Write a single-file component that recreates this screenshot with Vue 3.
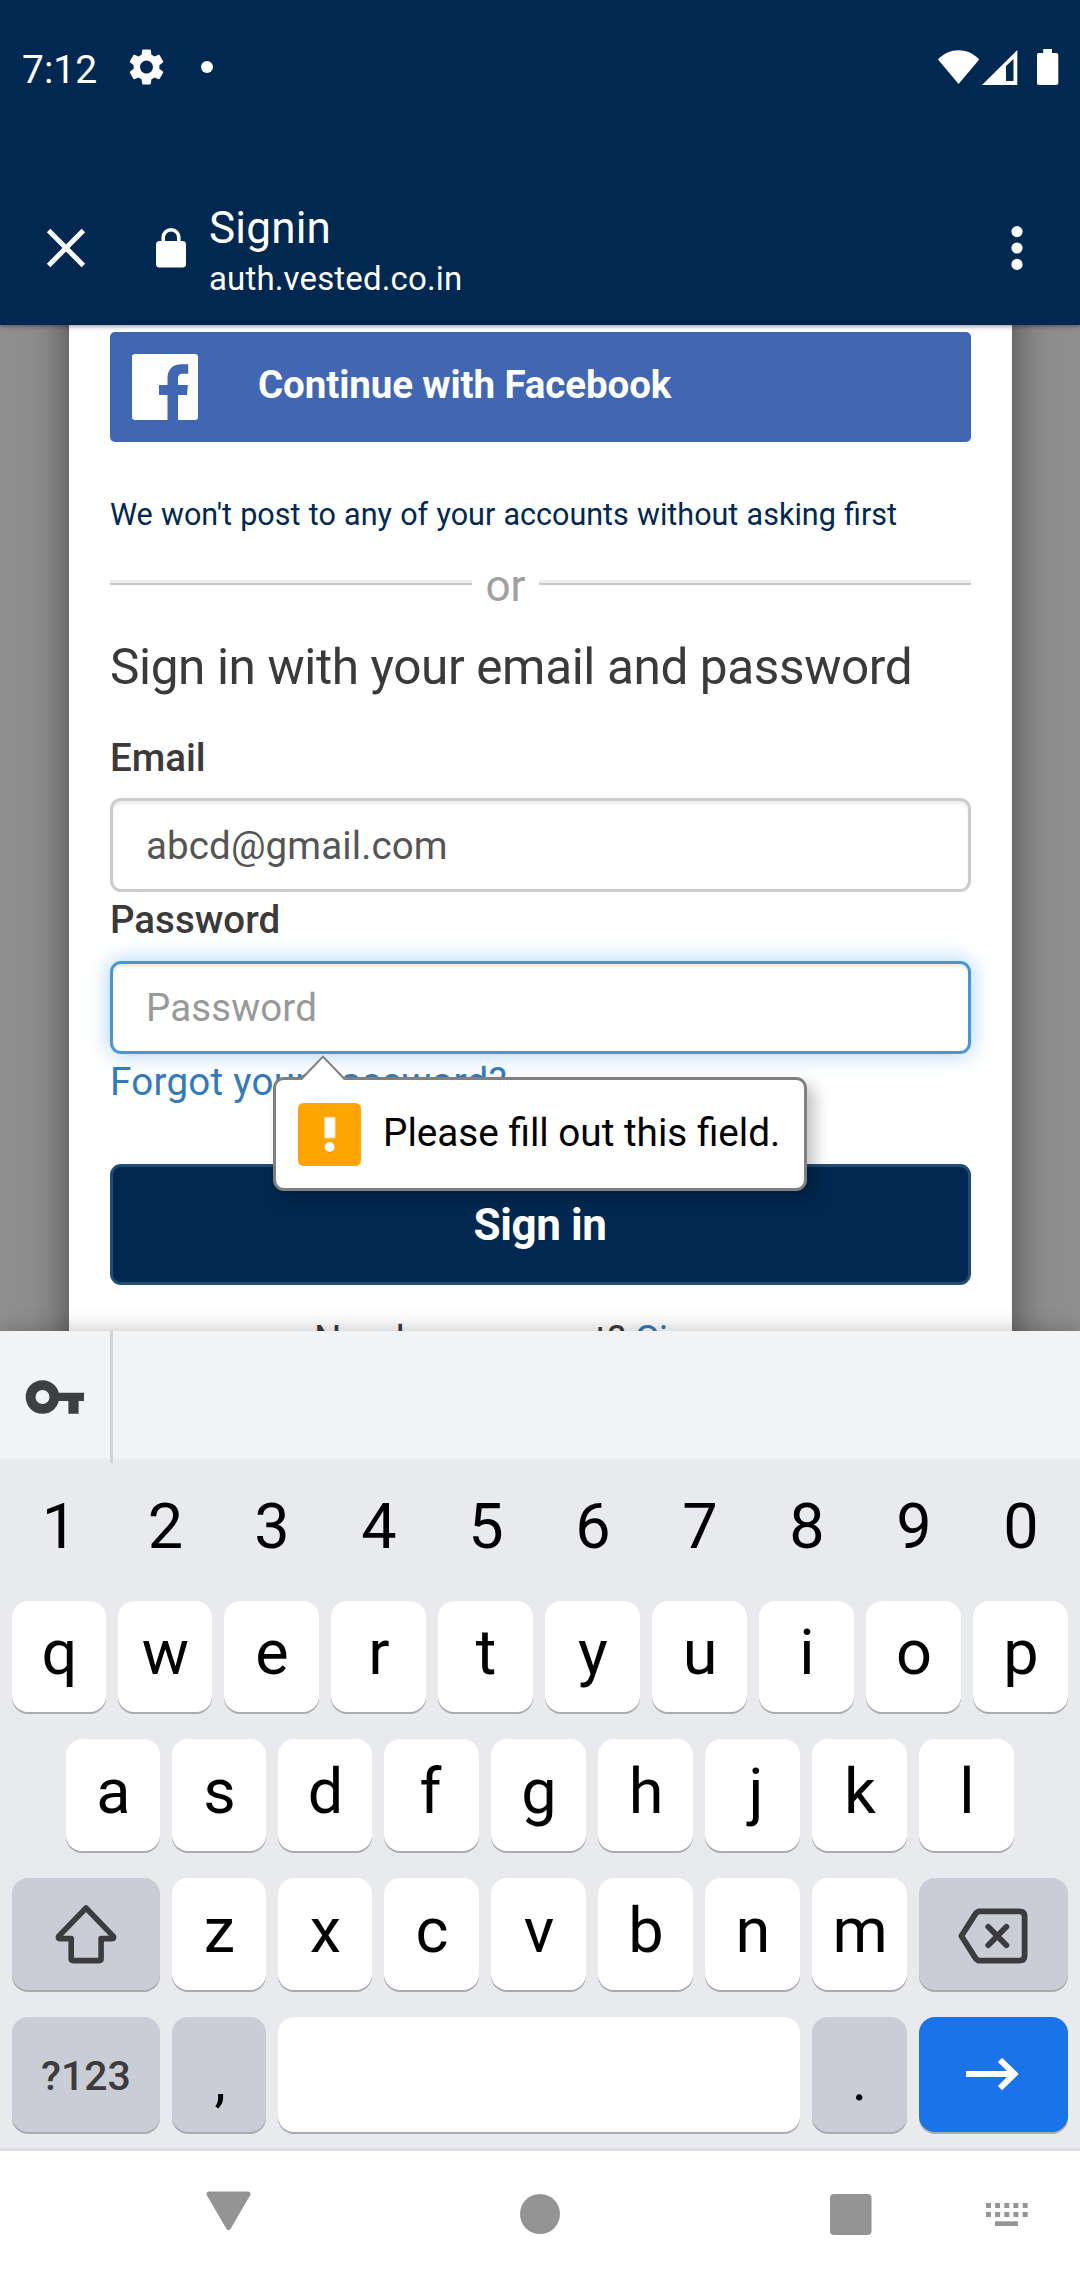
<script setup>
const digits = '1234567890'.split('')
const topRow = 'qwertyuiop'.split('')
const homeRow = 'asdfghjkl'.split('')
const bottomRow = 'zxcvbnm'.split('')
const dotColumns = [0, 9.1, 18.3, 27.4, 36.6]
</script>

<template>
  <div class="phone">
    <header class="header">
      <div class="status">
        <span class="clock">7:12</span>
        <svg class="gear" viewBox="0 0 24 24" width="43" height="44" preserveAspectRatio="none">
          <path fill="#fff" d="M19.14 12.94c.04-.3.06-.61.06-.94 0-.32-.02-.64-.07-.94l2.03-1.58c.18-.14.23-.41.12-.61l-1.92-3.32c-.12-.22-.37-.29-.59-.22l-2.39.96c-.5-.38-1.03-.7-1.62-.94l-.36-2.54c-.04-.24-.24-.41-.48-.41h-3.84c-.24 0-.43.17-.47.41l-.36 2.54c-.59.24-1.13.57-1.62.94l-2.39-.96c-.22-.08-.47 0-.59.22L2.74 8.87c-.12.21-.08.47.12.61l2.03 1.58c-.05.3-.09.63-.09.94s.02.64.07.94l-2.03 1.58c-.18.14-.23.41-.12.61l1.92 3.32c.12.22.37.29.59.22l2.39-.96c.5.38 1.03.7 1.62.94l.36 2.54c.05.24.24.41.48.41h3.84c.24 0 .44-.17.47-.41l.36-2.54c.59-.24 1.13-.56 1.62-.94l2.39.96c.22.08.47 0 .59-.22l1.92-3.32c.12-.22.07-.47-.12-.61l-2.01-1.58zM12 15.6c-1.98 0-3.6-1.62-3.6-3.6s1.62-3.6 3.6-3.6 3.6 1.62 3.6 3.6-1.62 3.6-3.6 3.6z" />
        </svg>
        <i class="notification-dot"></i>
        <svg class="indicators" width="122" height="38" viewBox="937 48 122 38" fill="#fff">
          <path d="M958.6 84 L938 59.5 C949.5 47.2 967.7 47.2 979.2 59.5 Z" />
          <path fill-rule="evenodd" d="M982 85 L1017.3 50 V85 Z M1006 66 V81 H1013.5 V59 Z" />
          <path d="M1043.2 49 h8.8 v4 h4.3 a2 2 0 0 1 2 2 v28 a2 2 0 0 1 -2 2 h-17.3 a2 2 0 0 1 -2 -2 v-28 a2 2 0 0 1 2 -2 h4.2 z" />
        </svg>
      </div>
      <div class="toolbar">
        <svg class="close" width="40" height="40" viewBox="0 0 40 40" fill="none" stroke="#fff" stroke-width="5">
          <path d="M2.6 2.6 L37.4 37.4 M37.4 2.6 L2.6 37.4" />
        </svg>
        <svg class="lock" width="30" height="40" viewBox="0 0 30 40">
          <rect x="0" y="13" width="30" height="26.5" rx="3.5" fill="#fff" />
          <path d="M7.2 14 V9.6 a7.8 7.8 0 0 1 15.6 0 V14" fill="none" stroke="#fff" stroke-width="3.6" />
        </svg>
        <div class="titles">
          <span class="title">Signin</span>
          <span class="host">auth.vested.co.in</span>
        </div>
        <svg class="menu" width="12" height="46" viewBox="0 0 12 46" fill="#fff">
          <circle cx="6" cy="6.6" r="5.6" /><circle cx="6" cy="23" r="5.6" /><circle cx="6" cy="39.4" r="5.6" />
        </svg>
      </div>
    </header>

    <main class="page">
      <section class="card">
        <div class="facebook">
          <svg width="66" height="66" viewBox="0 0 66 66">
            <rect width="66" height="66" rx="3" fill="#fff" />
            <path fill="#4267b2" d="M35.5 66 V41 H27 V31 H35.5 V24.5 C35.5 15.5 40.5 10.3 49.5 10.3 H56.2 V19.7 H51 C47 19.7 46 21.6 46 25 V31 H55.9 L55 41 H46 V66 Z" />
          </svg>
          <span>Continue with Facebook</span>
        </div>
        <p class="note">We won't post to any of your accounts without asking first</p>
        <div class="divider"><i class="rule left"></i><span>or</span><i class="rule right"></i></div>
        <h1>Sign in with your email and password</h1>

        <label class="label">Email</label>
        <div class="input email">abcd@gmail.com</div>

        <label class="label second">Password</label>
        <div class="input password">
          <span>Password</span>
          <div class="tooltip">
            <svg class="pointer" width="46" height="27" viewBox="0 0 46 27">
              <path d="M0 27 L23 2 L46 27 Z" fill="#fff" />
              <path d="M1.2 24.2 L23 1.6 L44.8 24.2" fill="none" stroke="#808080" stroke-width="2" />
            </svg>
            <svg width="63" height="63" viewBox="0 0 63 63">
              <rect width="63" height="63" rx="5.5" fill="#ffa400" />
              <rect x="26.6" y="14.3" width="10.4" height="20.6" fill="#fff" stroke="#ffdca0" stroke-width="1" />
              <circle cx="31.6" cy="44.8" r="5" fill="#ff7a00" />
              <circle cx="31.6" cy="44" r="5" fill="#fff" />
            </svg>
            <span>Please fill out this field.</span>
          </div>
        </div>

        <a class="forgot">Forgot your password?</a>
        <div class="submit">Sign in</div>
        <p class="signup">Need an account? <a>Sign up</a></p>
      </section>
    </main>

    <section class="keyboard">
      <div class="strip">
        <div class="strip-key">
          <svg width="60" height="36" viewBox="0 0 60 36">
            <circle cx="17.5" cy="18" r="11.9" fill="none" stroke="#3c4043" stroke-width="9.8" />
            <path d="M31 13.8 H59 V22 H53.6 V34.8 H43.4 V22 H31 Z" fill="#3c4043" />
          </svg>
        </div>
      </div>
      <div class="row digits">
        <span v-for="d in digits" :key="d" class="digit">{{ d }}</span>
      </div>
      <div class="row first">
        <span v-for="k in topRow" :key="k" class="key">{{ k }}</span>
      </div>
      <div class="row home">
        <span v-for="k in homeRow" :key="k" class="key" :class="'key-' + k">{{ k }}</span>
      </div>
      <div class="row third">
        <span class="key mod wide">
          <svg class="shift" width="64" height="62" viewBox="0 0 64 62" fill="none" stroke="#3c3c3e" stroke-width="5.6" stroke-linejoin="round">
            <path d="M32 6 L4.6 34.4 Q3.4 36.6 6 36.6 H17.2 V56.5 Q17.2 58.6 19.3 58.6 H45 Q47.1 58.6 47.1 56.5 V36.6 H58 Q60.6 36.6 59.4 34.4 Z" />
          </svg>
        </span>
        <span v-for="k in bottomRow" :key="k" class="key">{{ k }}</span>
        <span class="key mod widest">
          <svg class="backspace" width="70" height="56" viewBox="0 0 70 56" fill="none" stroke="#3c3c3e" stroke-width="5.8" stroke-linejoin="round">
            <path d="M20.5 3.4 H61.5 Q66.6 3.4 66.6 8.5 V47.5 Q66.6 52.6 61.5 52.6 H20.5 L17.8 50.6 L3.4 28 L17.8 5.4 Z" />
            <path d="M30.2 18.8 L48.4 37.2 M48.4 18.8 L30.2 37.2" stroke-linecap="round" />
          </svg>
        </span>
      </div>
      <div class="row last">
        <span class="key mod wide symbols">?123</span>
        <span class="key mod punct comma">,</span>
        <span class="key space"></span>
        <span class="key mod punct">.</span>
        <span class="key mod widest enter">
          <svg width="54" height="34" viewBox="0 0 54 34" fill="none" stroke="#fff" stroke-width="6">
            <path d="M0 17 H48 M34 2.8 L48.4 17 L34 31.2" />
          </svg>
        </span>
      </div>
    </section>

    <nav class="nav">
      <svg width="1080" height="129" viewBox="0 2151 1080 129" fill="#949494" stroke="#949494">
        <path d="M209 2194 H248 L228.5 2227.6 Z" stroke-width="5" stroke-linejoin="round" />
        <circle cx="540" cy="2214" r="20" stroke="none" />
        <rect x="830" y="2194" width="41.5" height="41" rx="4" stroke="none" />
        <g stroke="none">
          <rect v-for="x in dotColumns" :key="'a' + x" :x="986 + x" y="2203" width="5" height="5" />
          <rect v-for="x in dotColumns" :key="'b' + x" :x="986 + x" y="2212" width="5" height="5" />
          <rect x="995" y="2221.3" width="23" height="4.7" />
        </g>
      </svg>
    </nav>
  </div>
</template>

<style>
body {
  margin: 0;
}
</style>

<style scoped>
.phone {
  width: 1080px;
  height: 2280px;
  display: flex;
  flex-direction: column;
  overflow: hidden;
  font-family: Roboto, "Liberation Sans", sans-serif;
  background: #fff;
}
.phone * {
  box-sizing: border-box;
}
svg {
  display: block;
  flex: none;
}
p,
h1 {
  margin: 0;
  font-weight: 400;
}

.header {
  height: 325px;
  flex: none;
  background: #002850;
  color: #fff;
  position: relative;
  z-index: 1;
  box-shadow: 0 1px 5px rgba(0, 0, 0, 0.45);
}
.status {
  height: 134px;
  display: flex;
  align-items: center;
  padding: 0 21px 0 22px;
}
.clock {
  width: 103px;
  font-size: 39px;
  line-height: 46px;
  padding-top: 5px;
}
.notification-dot {
  width: 12px;
  height: 12px;
  margin-left: 33px;
  border-radius: 50%;
  background: #fff;
}
.indicators {
  margin-left: auto;
}
.toolbar {
  height: 191px;
  padding: 37px 57px 0 46px;
  display: flex;
  align-items: center;
}
.lock {
  margin-left: 70px;
}
.titles {
  display: flex;
  flex-direction: column;
  margin: 5px 0 0 23px;
}
.title {
  font-size: 44px;
  line-height: 52px;
  letter-spacing: 0.2px;
}
.host {
  font-size: 33px;
  line-height: 40px;
  padding-top: 5px;
  letter-spacing: 0.15px;
}
.menu {
  margin-left: auto;
}

.page {
  height: 1006px;
  flex: none;
  background: #8f8f8f;
  padding: 0 68px 0 69px;
  overflow: hidden;
}
.card {
  height: 1100px;
  margin-top: -60px;
  background: #fff;
  padding: 67px 41px 0;
  box-shadow: 0 14px 41px rgba(0, 0, 0, 0.5);
  color: #3a3a3a;
}
.facebook {
  height: 110px;
  border-radius: 5px;
  background: #4267b2;
  color: #fff;
  display: flex;
  align-items: center;
  padding-left: 22px;
  font-size: 38.5px;
  font-weight: 700;
  line-height: 54px;
  letter-spacing: -0.1px;
}
.facebook span {
  margin-left: 60px;
  padding-bottom: 4px;
}
.note {
  margin-top: 52px;
  font-size: 30.5px;
  line-height: 42px;
  word-spacing: 0.7px;
  color: #002850;
  white-space: nowrap;
}
.divider {
  height: 52px;
  margin-top: 24px;
  display: flex;
  align-items: center;
  justify-content: space-between;
  color: #a0a0a0;
  font-size: 44px;
  line-height: 52px;
}
.rule {
  height: 5px;
  margin-bottom: 7px;
  background: #ececec;
  border-bottom: 2px solid #c8c8c8;
}
.rule.left {
  width: 362px;
}
.rule.right {
  width: 432px;
}
h1 {
  margin-top: 26px;
  font-size: 49.5px;
  line-height: 58px;
  letter-spacing: -0.38px;
  white-space: nowrap;
}
.label {
  display: block;
  margin-top: 35px;
  font-size: 38.5px;
  line-height: 54px;
  font-weight: 500;
}
.label.second {
  margin-top: 1px;
}
.input {
  height: 94px;
  margin-top: 13px;
  border: 3px solid #ccc;
  border-radius: 11px;
  padding-left: 33px;
  display: flex;
  align-items: center;
  font-size: 38.5px;
  line-height: 54px;
  letter-spacing: 0.12px;
  color: #555;
  background: #fff;
  box-shadow: inset 0 3px 3px rgba(0, 0, 0, 0.075);
}
.input.email {
  padding-top: 1px;
}
.input.password {
  position: relative;
  z-index: 2;
  height: 93px;
  margin-top: 14px;
  color: #999;
  border-color: #4896d4;
  box-shadow: inset 0 3px 3px rgba(0, 0, 0, 0.075), 0 0 22px rgba(102, 175, 233, 0.6);
}
.tooltip {
  position: absolute;
  left: 160px;
  top: 113px;
  width: 534px;
  height: 114px;
  border: 3px solid #808080;
  border-radius: 11px;
  background: #fff;
  color: #000;
  display: flex;
  align-items: center;
  padding-left: 22px;
  white-space: nowrap;
  font-size: 38.7px;
  letter-spacing: normal;
  box-shadow: 8px 8px 15px rgba(0, 0, 0, 0.24);
}
.tooltip span {
  margin-left: 22px;
  padding-bottom: 3px;
}
.pointer {
  position: absolute;
  left: 24px;
  top: -25px;
}
.forgot {
  display: block;
  margin-top: 1px;
  font-size: 38.5px;
  line-height: 54px;
  letter-spacing: 0.3px;
  color: #337ab7;
}
.submit {
  height: 121px;
  margin-top: 55px;
  border: 3px solid #204d74;
  border-radius: 11px;
  background: #002850;
  color: #fff;
  display: flex;
  align-items: center;
  justify-content: center;
  padding-right: 1px;
  font-size: 44px;
  font-weight: 700;
  letter-spacing: -0.4px;
}
.signup {
  margin-top: 28px;
  padding-right: 2px;
  font-size: 38.5px;
  line-height: 54px;
  letter-spacing: 0.25px;
  text-align: center;
}
.signup a {
  color: #337ab7;
}

.keyboard {
  height: 820px;
  flex: none;
  position: relative;
  z-index: 3;
  background: #e8eaed;
  border-bottom: 3px solid #dedede;
  box-shadow: 0 -1px 20px rgba(0, 0, 0, 0.24);
  color: #000;
}
.strip {
  height: 132px;
  background: linear-gradient(#f1f3f4 0 126px, #e8eaed 130px);
}
.strip-key {
  width: 113px;
  height: 132px;
  border-right: 3px solid #d0d2d4;
  display: flex;
  align-items: center;
  padding-left: 25px;
}
.row {
  display: flex;
  gap: 12px;
  padding: 0 12px;
  font-size: 63px;
}
.digits {
  height: 111px;
  margin-top: 12px;
}
.first {
  height: 111px;
  margin-top: 15px;
}
.home {
  height: 112px;
  margin-top: 27px;
  padding: 0 66px;
}
.third {
  height: 112px;
  margin-top: 27px;
}
.last {
  height: 115px;
  margin-top: 27px;
}
.digit,
.key {
  flex: 0 0 95px;
  display: flex;
  align-items: center;
  justify-content: center;
  padding-bottom: 7px;
  padding-left: 1px;
  line-height: 74px;
}
.digit:nth-child(-n + 2),
.key:nth-child(-n + 2),
.home .key:nth-child(3),
.third .key:nth-child(3) {
  flex-basis: 94px;
}
.key {
  border-radius: 16px;
  background: #fff;
  box-shadow: 0 2px 0 #a9abae;
}
.key-f {
  padding-right: 3px;
}
.key-j {
  padding-left: 7px;
}
.key.mod {
  background: #cbcdd6;
  padding-bottom: 0;
  padding-left: 0;
}
.key.mod.wide {
  flex-basis: 148px;
}
.key.mod.widest {
  flex-basis: 149px;
  padding-right: 2px;
}
.shift {
  margin-bottom: 2px;
}
.backspace {
  margin-top: 4px;
}
.last .space {
  flex: 1 1 0;
}
.last .symbols {
  font-size: 41px;
  font-weight: 500;
  color: #3c3c3e;
  padding-top: 2px;
}
.last .punct {
  font-size: 57px;
  padding-top: 12px;
}
.key.mod.comma {
  padding-left: 2px;
}
.key.mod.enter {
  background: #1a73e8;
  padding-bottom: 1px;
}
.nav {
  height: 129px;
  flex: none;
  background: #fff;
  position: relative;
  z-index: 4;
}
</style>
